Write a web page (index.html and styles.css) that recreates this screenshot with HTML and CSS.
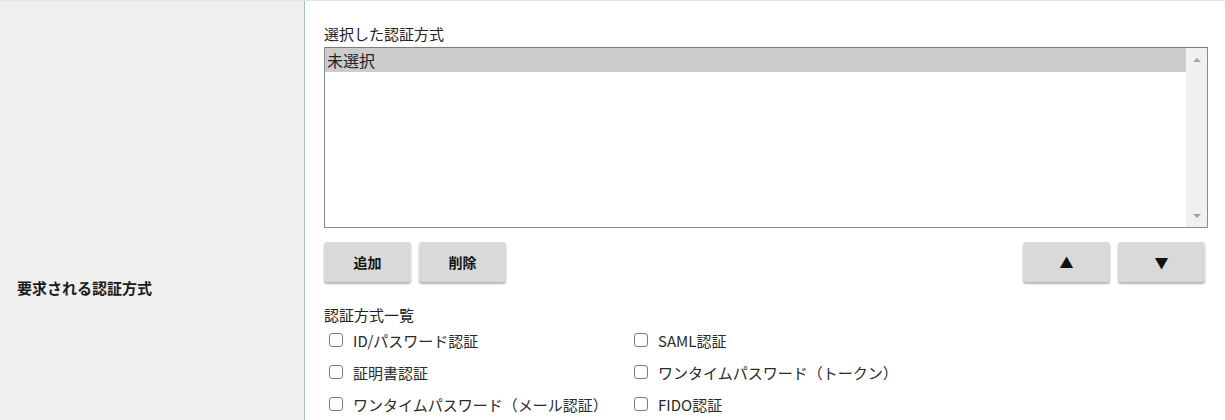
FILE: index.html
```html
<!DOCTYPE html>
<html lang="ja">
<head>
<meta charset="utf-8">
<link rel="stylesheet" href="styles.css">
</head>
<body>
<div class="row">
  <div class="head-cell"><span class="head-label">要求される認証方式</span></div>
  <div class="body-cell">
    <div class="field-label">選択した認証方式</div>
    <div class="listbox">
      <div class="list-items">
        <div class="list-item selected">未選択</div>
      </div>
      <div class="scrollbar">
        <span class="sb-up"></span>
        <span class="sb-down"></span>
      </div>
    </div>
    <div class="btn-row">
      <div class="btn-group">
        <button class="btn">追加</button>
        <button class="btn">削除</button>
      </div>
      <div class="btn-group">
        <button class="btn">▲</button>
        <button class="btn">▼</button>
      </div>
    </div>
    <div class="field-label list-title">認証方式一覧</div>
    <div class="check-grid">
      <label class="check"><input type="checkbox"><span>ID/パスワード認証</span></label>
      <label class="check"><input type="checkbox"><span>SAML認証</span></label>
      <label class="check"><input type="checkbox"><span>証明書認証</span></label>
      <label class="check"><input type="checkbox"><span>ワンタイムパスワード（トークン）</span></label>
      <label class="check"><input type="checkbox"><span>ワンタイムパスワード（メール認証）</span></label>
      <label class="check"><input type="checkbox"><span>FIDO認証</span></label>
    </div>
  </div>
</div>
</body>
</html>
```
FILE: styles.css
```css
html, body {
  margin: 0;
  padding: 0;
  background: #ffffff;
}
body {
  font-family: "Noto Sans CJK JP", "Noto Sans", sans-serif;
  color: #222222;
  overflow: hidden;
}
.row {
  display: flex;
  border-top: 1px solid #e1e5e8;
  min-height: 573px;
}
.head-cell {
  width: 305px;
  flex: none;
  background: #efefef;
  border-right: 1px solid #a9bcc8;
  display: flex;
  align-items: center;
  padding-left: 17px;
  box-sizing: border-box;
}
.head-label {
  font-size: 15px;
  font-weight: bold;
  line-height: 20px;
  color: #1a1a1a;
}
.body-cell {
  flex: 1;
  padding: 23px 17px 0 19px;
}
.field-label {
  font-size: 15px;
  line-height: 20px;
  margin-bottom: 3px;
  color: #222222;
}
.listbox {
  display: flex;
  height: 179px;
  border: 1px solid #8a8a8a;
  border-top-color: #7a7a7a;
  background: #ffffff;
}
.list-items {
  flex: 1;
}
.list-item {
  font-size: 16px;
  line-height: 24px;
  padding-left: 2px;
  color: #222222;
}
.list-item.selected {
  background: #cccccc;
}
.scrollbar {
  width: 21px;
  background: #f0f0f0;
  display: flex;
  flex-direction: column;
  justify-content: space-between;
  align-items: center;
  padding: 10px 0 9px;
  box-sizing: border-box;
}
.sb-up, .sb-down {
  width: 0;
  height: 0;
  border-left: 4px solid transparent;
  border-right: 4px solid transparent;
}
.sb-up {
  border-bottom: 4px solid #a3a3a3;
}
.sb-down {
  border-top: 4px solid #a3a3a3;
}
.btn-row {
  display: flex;
  justify-content: space-between;
  margin-top: 14px;
  padding-right: 3px;
}
.btn-group {
  display: flex;
  gap: 8px;
}
.btn {
  width: 87px;
  height: 40px;
  border: none;
  border-radius: 3px;
  background: #d9d9d9;
  box-shadow: 0 2px 2px rgba(0, 0, 0, 0.3);
  font-family: "Noto Sans CJK JP", "Noto Sans", sans-serif;
  font-size: 14px;
  font-weight: bold;
  color: #111111;
  padding: 0;
}
.list-title {
  margin-top: 23px;
  margin-bottom: 0;
}
.check-grid {
  display: grid;
  grid-template-columns: 305px 305px;
  margin-top: -1px;
}
.check {
  display: flex;
  align-items: center;
  height: 32px;
  padding-left: 5px;
  font-size: 15px;
  color: #2a2a2a;
}
.check input {
  appearance: none;
  -webkit-appearance: none;
  width: 14px;
  height: 14px;
  margin: 0 10px 0 0;
  border: 1.5px solid #7a7a7a;
  border-radius: 3px;
  background: #ffffff;
  box-sizing: border-box;
  flex: none;
}
```
